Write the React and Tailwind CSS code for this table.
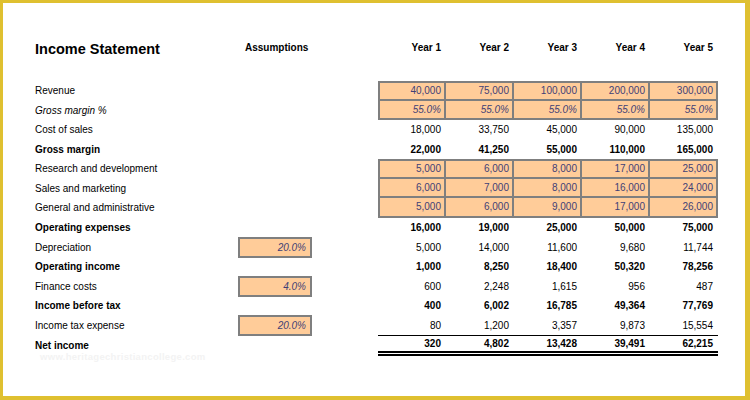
import React from 'react';

const rows = [
  { label: 'Revenue', vals: ['40,000', '75,000', '100,000', '200,000', '300,000'], input: 'first' },
  { label: 'Gross margin %', italic: true, vals: ['55.0%', '55.0%', '55.0%', '55.0%', '55.0%'], input: 'rest' },
  { label: 'Cost of sales', vals: ['18,000', '33,750', '45,000', '90,000', '135,000'] },
  { label: 'Gross margin', bold: true, vals: ['22,000', '41,250', '55,000', '110,000', '165,000'] },
  { label: 'Research and development', vals: ['5,000', '6,000', '8,000', '17,000', '25,000'], input: 'first' },
  { label: 'Sales and marketing', vals: ['6,000', '7,000', '8,000', '16,000', '24,000'], input: 'rest' },
  { label: 'General and administrative', vals: ['5,000', '6,000', '9,000', '17,000', '26,000'], input: 'rest' },
  { label: 'Operating expenses', bold: true, vals: ['16,000', '19,000', '25,000', '50,000', '75,000'] },
  { label: 'Depreciation', assumption: '20.0%', vals: ['5,000', '14,000', '11,600', '9,680', '11,744'] },
  { label: 'Operating income', bold: true, vals: ['1,000', '8,250', '18,400', '50,320', '78,256'] },
  { label: 'Finance costs', assumption: '4.0%', vals: ['600', '2,248', '1,615', '956', '487'] },
  { label: 'Income before tax', bold: true, vals: ['400', '6,002', '16,785', '49,364', '77,769'] },
  { label: 'Income tax expense', assumption: '20.0%', vals: ['80', '1,200', '3,357', '9,873', '15,554'] },
  { label: 'Net income', bold: true, total: true, vals: ['320', '4,802', '13,428', '39,491', '62,215'] },
];

const gridCols = 'grid grid-cols-[203px_74px_66px_repeat(5,68px)]';

const YearCell = ({ value, row, col }) => {
  let cls = 'flex items-center justify-end h-full box-border';
  if (row.input) {
    cls += ' bg-[#ffcc99] text-[#3f3f76] border-[#7f7f7f] border-r-2 border-b-2 pr-[3px]';
    if (col === 0) cls += ' border-l-2';
    if (row.input === 'first') cls += ' border-t-2';
    if (row.italic) cls += ' italic';
  } else if (row.total) {
    cls += ' pr-[5px] border-t border-b-[5px] border-double border-black';
  } else {
    cls += ' pr-[5px]';
  }
  if (row.bold) cls += ' font-bold';
  return <div className={cls}>{value}</div>;
};

export default function App() {
  return (
    <div
      className="relative w-[750px] h-[400px] box-border bg-white border-[#dfc030] border-t-[3px] border-l-[3px] border-r-[5px] border-b-[4px] text-[10px] text-black"
      style={{ fontFamily: '"Liberation Sans", Arial, sans-serif' }}
    >
      <div className="pl-[32px] pt-[34px]">
        {/* Header */}
        <div className={`${gridCols} h-[20px] items-center`}>
          <div className="text-[14.5px] leading-[16px] font-bold mt-[3px] whitespace-nowrap">Income Statement</div>
          <div className="font-bold pl-[7px]">Assumptions</div>
          <div />
          {['Year 1', 'Year 2', 'Year 3', 'Year 4', 'Year 5'].map((y) => (
            <div key={y} className="font-bold text-right pr-[5px]">{y}</div>
          ))}
        </div>

        {/* Body */}
        <div className="mt-[24px]">
          {rows.map((row) => (
            <div key={row.label} className={`${gridCols} h-[19.5px] items-center`}>
              <div className={`${row.bold ? 'font-bold' : ''} ${row.italic ? 'italic' : ''}`}>{row.label}</div>
              <div className="h-full flex items-center">
                {row.assumption && (
                  <div className="w-full h-[21px] box-border flex items-center justify-end pr-[4px] bg-[#ffcc99] border-2 border-[#7f7f7f] italic text-[#3f3f76]">
                    {row.assumption}
                  </div>
                )}
              </div>
              <div />
              {row.vals.map((v, i) => (
                <YearCell key={i} value={v} row={row} col={i} />
              ))}
            </div>
          ))}
        </div>
      </div>

      <div className="absolute left-[37px] top-[347px] text-[9.5px] tracking-[0.3px] text-[#f3f3f3] font-bold">
        www.heritagechristiancollege.com
      </div>
    </div>
  );
}
